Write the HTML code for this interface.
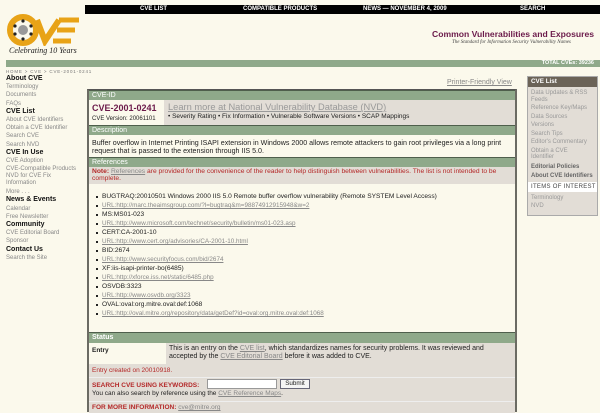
<!DOCTYPE html>
<html><head><meta charset="utf-8"><style>
*{margin:0;padding:0;box-sizing:border-box}
body{width:600px;height:412px;background:#fbf9ec;font-family:"Liberation Sans",sans-serif;font-size:6.5px;color:#222;position:relative;overflow:hidden}
.a{position:absolute;white-space:nowrap}
.topbar{left:85px;top:5px;width:515px;height:9px;background:#000;color:#fff;font-weight:bold;font-size:6px;line-height:9px}
.green{left:6px;top:60px;width:594px;height:7px;background:#8fa98a;color:#fff;font-size:5.5px;font-weight:bold;text-align:right;padding-right:6px;line-height:7px}
.nav div{height:8.2px;line-height:8.2px}
.nav .h{font-weight:bold;color:#111;font-size:7px}
.nav .l{color:#888;font-size:6px}
.box{left:87px;top:89px;width:430px;height:323px;border-left:2px solid #6b6b63;border-right:2px solid #6b6b63;border-top:1px solid #555}
.hd{position:absolute;left:0;width:426px;background:#8fa98a;color:#fff;font-size:7px;padding-left:3px;border-top:1px solid #4f5f4c}
.gray{position:absolute;left:0;width:426px;background:#e2ddd6}
u{color:#888}
.ref div{height:9px;line-height:9px;padding-left:8px;position:relative}
.ref div:before{content:"";position:absolute;left:2px;top:4px;width:2px;height:2px;background:#222}
.ref .u{color:#888;text-decoration:underline;font-size:6.3px}
.red{color:#b42828}
.side{left:527px;top:76px;width:71px;height:140px;background:#e2ddd6;border:1px solid #aaa}
.side div{font-size:6px;color:#999;line-height:6.5px;padding-left:3px;margin-bottom:2px}
</style></head><body>
<div class="a topbar"><span style="position:absolute;left:55px">CVE LIST</span><span style="position:absolute;left:158px">COMPATIBLE PRODUCTS</span><span style="position:absolute;left:278px">NEWS — NOVEMBER 4, 2009</span><span style="position:absolute;left:435px">SEARCH</span></div>
<div class="a" style="left:7px;top:14px;width:72px;height:32px">
<svg width="72" height="32"><circle cx="16" cy="16" r="13" fill="none" stroke="#e8a317" stroke-width="6"/><circle cx="16" cy="16" r="5" fill="#999"/><g fill="#222"><circle cx="16" cy="7" r="1.6"/><circle cx="16" cy="25" r="1.6"/><circle cx="8" cy="12" r="1.6"/><circle cx="24" cy="12" r="1.6"/><circle cx="8" cy="20" r="1.6"/><circle cx="24" cy="20" r="1.6"/></g><path d="M30 6 L38 27 L52 6" fill="none" stroke="#e8a317" stroke-width="6"/><path d="M52 6 H72 M50 16 H68 M46 27 H64" stroke="#e8a317" stroke-width="5"/></svg></div>
<div class="a" style="left:9px;top:46px;font-family:'Liberation Serif',serif;font-style:italic;font-size:8px;color:#222">Celebrating 10 Years</div>
<div class="a" style="left:432px;top:29px;font-weight:bold;font-size:8.6px;color:#6b1a4a">Common Vulnerabilities and Exposures</div>
<div class="a" style="left:452px;top:40px;font-family:'Liberation Serif',serif;font-style:italic;font-size:5px;color:#444">The Standard for Information Security Vulnerability Names</div>
<div class="a green">TOTAL CVEs: 39236</div>
<div class="a" style="left:6px;top:69px;font-size:4.5px;color:#777;letter-spacing:.8px">HOME &gt; CVE &gt; CVE-2001-0241</div>
<div class="a nav" style="left:6px;top:75px">
<div class="h">About CVE</div><div class="l">Terminology</div><div class="l">Documents</div><div class="l">FAQs</div>
<div class="h">CVE List</div><div class="l">About CVE Identifiers</div><div class="l">Obtain a CVE Identifier</div><div class="l">Search CVE</div><div class="l">Search NVD</div>
<div class="h">CVE In Use</div><div class="l">CVE Adoption</div><div class="l">CVE-Compatible Products</div><div class="l" style="line-height:6.5px;height:15px">NVD for CVE Fix<br>Information</div><div class="l">More . . .</div>
<div class="h">News &amp; Events</div><div class="l">Calendar</div><div class="l">Free Newsletter</div>
<div class="h">Community</div><div class="l">CVE Editorial Board</div><div class="l">Sponsor</div>
<div class="h">Contact Us</div><div class="l">Search the Site</div></div>
<div class="a" style="left:447px;top:79px;font-size:7px;color:#888;text-decoration:underline">Printer-Friendly View</div>
<div class="a box">
<div class="hd" style="top:0;height:10px;line-height:9px">CVE-ID</div>
<div class="gray" style="top:10px;height:25px"></div>
<div style="position:absolute;left:0;top:10px;width:75px;height:25px;background:#fbf9ec"></div>
<div class="a" style="left:3px;top:13px;font-weight:bold;font-size:9px;color:#6b1a4a">CVE-2001-0241</div>
<div class="a" style="left:3px;top:26px;font-size:6px">CVE Version: 20061101</div>
<div class="a" style="left:79px;top:12px;font-size:9.3px;color:#999;text-decoration:underline">Learn more at National Vulnerability Database (NVD)</div>
<div class="a" style="left:79px;top:23px;font-size:6.5px">• Severity Rating • Fix Information • Vulnerable Software Versions • SCAP Mappings</div>
<div class="hd" style="top:35px;height:10px;line-height:9px">Description</div>
<div class="a" style="left:3px;top:49px;font-size:7.1px;line-height:8px">Buffer overflow in Internet Printing ISAPI extension in Windows 2000 allows remote attackers to gain root privileges via a long print<br>request that is passed to the extension through IIS 5.0.</div>
<div class="hd" style="top:67px;height:10px;line-height:9px">References</div>
<div class="gray" style="top:77px;height:17px"></div>
<div class="a red" style="left:3px;top:78px;font-size:6.7px;line-height:7px"><b>Note:</b> <u>References</u> are provided for the convenience of the reader to help distinguish between vulnerabilities. The list is not intended to be<br>complete.</div>
<div class="a ref" style="left:5px;top:102px;font-size:6.6px">
<div>BUGTRAQ:20010501 Windows 2000 IIS 5.0 Remote buffer overflow vulnerability (Remote SYSTEM Level Access)</div>
<div class="u">URL:http://marc.theaimsgroup.com/?l=bugtraq&amp;m=98874912915948&amp;w=2</div>
<div>MS:MS01-023</div>
<div class="u">URL:http://www.microsoft.com/technet/security/bulletin/ms01-023.asp</div>
<div>CERT:CA-2001-10</div>
<div class="u">URL:http://www.cert.org/advisories/CA-2001-10.html</div>
<div>BID:2674</div>
<div class="u">URL:http://www.securityfocus.com/bid/2674</div>
<div>XF:iis-isapi-printer-bo(6485)</div>
<div class="u">URL:http://xforce.iss.net/static/6485.php</div>
<div>OSVDB:3323</div>
<div class="u">URL:http://www.osvdb.org/3323</div>
<div>OVAL:oval:org.mitre.oval:def:1068</div>
<div class="u">URL:http://oval.mitre.org/repository/data/getDef?id=oval:org.mitre.oval:def:1068</div>
</div>
<div class="hd" style="top:242px;height:11px;line-height:10px;font-weight:bold">Status</div>
<div class="gray" style="top:253px;height:70px"></div>
<div style="position:absolute;left:0;top:253px;width:77px;height:21px;background:#fbf9ec"></div>
<div class="a" style="left:3px;top:257px;font-weight:bold;font-size:6.5px">Entry</div>
<div class="a" style="left:80px;top:255px;font-size:7px;line-height:8px">This is an entry on the <u>CVE list</u>, which standardizes names for security problems. It was reviewed and<br>accepted by the <u>CVE Editorial Board</u> before it was added to CVE.</div>
<div class="a red" style="left:3px;top:277px;font-size:6.5px">Entry created on 20010918.</div>
<div style="position:absolute;left:0;top:287px;width:426px;border-top:1px solid #eee"></div>
<div class="a red" style="left:3px;top:292px;font-size:6.5px;font-weight:bold">SEARCH CVE USING KEYWORDS:</div>
<div class="a" style="left:118px;top:289px;width:70px;height:10px;background:#fff;border:1px solid #999"></div>
<div class="a" style="left:191px;top:289px;width:30px;height:10px;background:#f4f4f4;border:1px solid #667;font-size:6.3px;text-align:center;line-height:8px">Submit</div>
<div class="a" style="left:3px;top:300px;font-size:6.5px">You can also search by reference using the <u>CVE Reference Maps</u>.</div>
<div style="position:absolute;left:0;top:311px;width:426px;border-top:1px solid #eee"></div>
<div class="a red" style="left:3px;top:314px;font-size:6.5px;font-weight:bold">FOR MORE INFORMATION: <u style="font-weight:normal">cve@mitre.org</u></div>
</div>
<div class="a side">
<div style="background:#6b6357;color:#fff;font-weight:bold;height:10px;line-height:10px;font-size:6.3px;margin-bottom:3px">CVE List</div>
<div>Data Updates &amp; RSS<br>Feeds</div><div>Reference Key/Maps</div><div>Data Sources</div><div>Versions</div><div>Search Tips</div><div>Editor's Commentary</div><div>Obtain a CVE<br>Identifier</div>
<div style="color:#666;font-weight:bold;line-height:9px;margin:0">Editorial Policies</div><div style="color:#666;font-weight:bold;line-height:9px;margin:0 0 1px">About CVE Identifiers</div>
<div style="background:#fff;color:#444;line-height:10px;margin:1px 0 3px;letter-spacing:.3px">ITEMS OF INTEREST</div>
<div>Terminology</div><div>NVD</div></div>
</body></html>
